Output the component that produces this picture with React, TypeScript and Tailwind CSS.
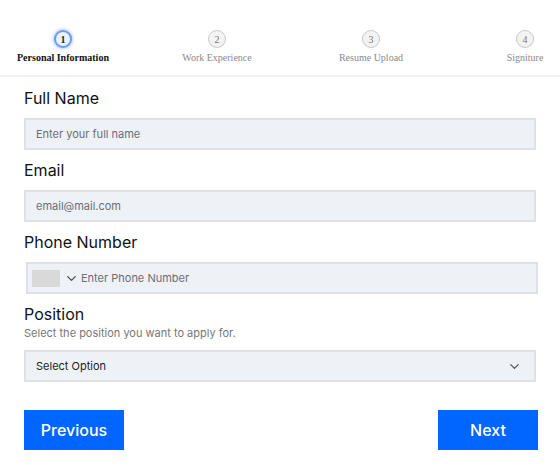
import { ChevronDown } from 'lucide-react'

const steps = [
  { n: 1, label: 'Personal Information' },
  { n: 2, label: 'Work Experience' },
  { n: 3, label: 'Resume Upload' },
  { n: 4, label: 'Signiture' },
]

function Label({ children }: { children: React.ReactNode }) {
  return <div className="text-[16px] leading-6 font-normal text-[#111]">{children}</div>
}

const inputCls =
  'w-full h-8 border-2 border-[#dfe1e6] bg-[#eef1f6] px-[10px] text-[11px] text-[#222] placeholder:text-[#6b6f76] outline-none'

export default function App() {
  return (
    <main className="w-[560px] h-[470px] bg-white overflow-hidden font-['Inter',sans-serif]">
      {/* Stepper */}
      <div className="h-[77px] border-b-2 border-[#f1f1f1] overflow-hidden">
        <div className="grid grid-cols-[repeat(4,154px)] -ml-[14px] pt-[30px] font-['Liberation_Serif',serif]">
          {steps.map((s) => {
            const active = s.n === 1
            return (
              <div key={s.n} className="flex flex-col items-center">
                {active ? (
                  <div className="w-[18px] h-[18px] rounded-full border-2 border-[#6b9ef5] bg-[#eef4ff] shadow-[0_0_3px_1px_rgba(80,140,255,0.45)] flex items-center justify-center text-[10px] font-bold text-[#222]">
                    {s.n}
                  </div>
                ) : (
                  <div className="w-[18px] h-[18px] rounded-full border border-[#c9c9c9] bg-[#f3f3f3] flex items-center justify-center text-[10px] text-[#777]">
                    {s.n}
                  </div>
                )}
                <div
                  className={`mt-[4px] whitespace-nowrap text-[10px] leading-3 ${
                    active ? 'font-bold text-[#111]' : 'text-[#8a8a8a]'
                  }`}
                >
                  {s.label}
                </div>
              </div>
            )
          })}
        </div>
      </div>

      {/* Form */}
      <div className="px-6 pt-[9px] flex flex-col">
        <Label>Full Name</Label>
        <input className={`${inputCls} mt-2`} placeholder="Enter your full name" />

        <div className="mt-2">
          <Label>Email</Label>
        </div>
        <input className={`${inputCls} mt-2`} placeholder="email@mail.com" />

        <div className="mt-2">
          <Label>Phone Number</Label>
        </div>
        <div className="mt-2 ml-[2px] -mr-[2px] h-8 border-2 border-[#dfe1e6] bg-[#eef1f6] flex items-center pl-[4px] gap-[2px]">
          <div className="w-[28px] h-[17px] bg-[#d9d9d9]" />
          <ChevronDown size={15} strokeWidth={2.25} className="text-[#555] ml-[2px]" />
          <input
            className="flex-1 bg-transparent text-[11px] text-[#222] placeholder:text-[#6b6f76] outline-none"
            placeholder="Enter Phone Number"
          />
        </div>

        <div className="mt-2">
          <Label>Position</Label>
        </div>
        <div className="text-[11px] leading-[14px] text-[#777]">Select the position you want to apply for.</div>
        <div className="mt-[10px] h-8 border-2 border-[#dfe1e6] bg-[#eef1f6] flex items-center justify-between pl-[10px] pr-[12px]">
          <span className="text-[11px] text-[#222]">Select Option</span>
          <ChevronDown size={15} strokeWidth={2} className="text-[#555]" />
        </div>

        <div className="mt-7 flex justify-between">
          <button className="w-[100px] h-10 bg-[#0066ff] text-white text-[16px] font-medium">Previous</button>
          <button className="w-[100px] h-10 bg-[#0066ff] text-white text-[16px] font-medium -mr-[2px]">Next</button>
        </div>
      </div>
    </main>
  )
}
